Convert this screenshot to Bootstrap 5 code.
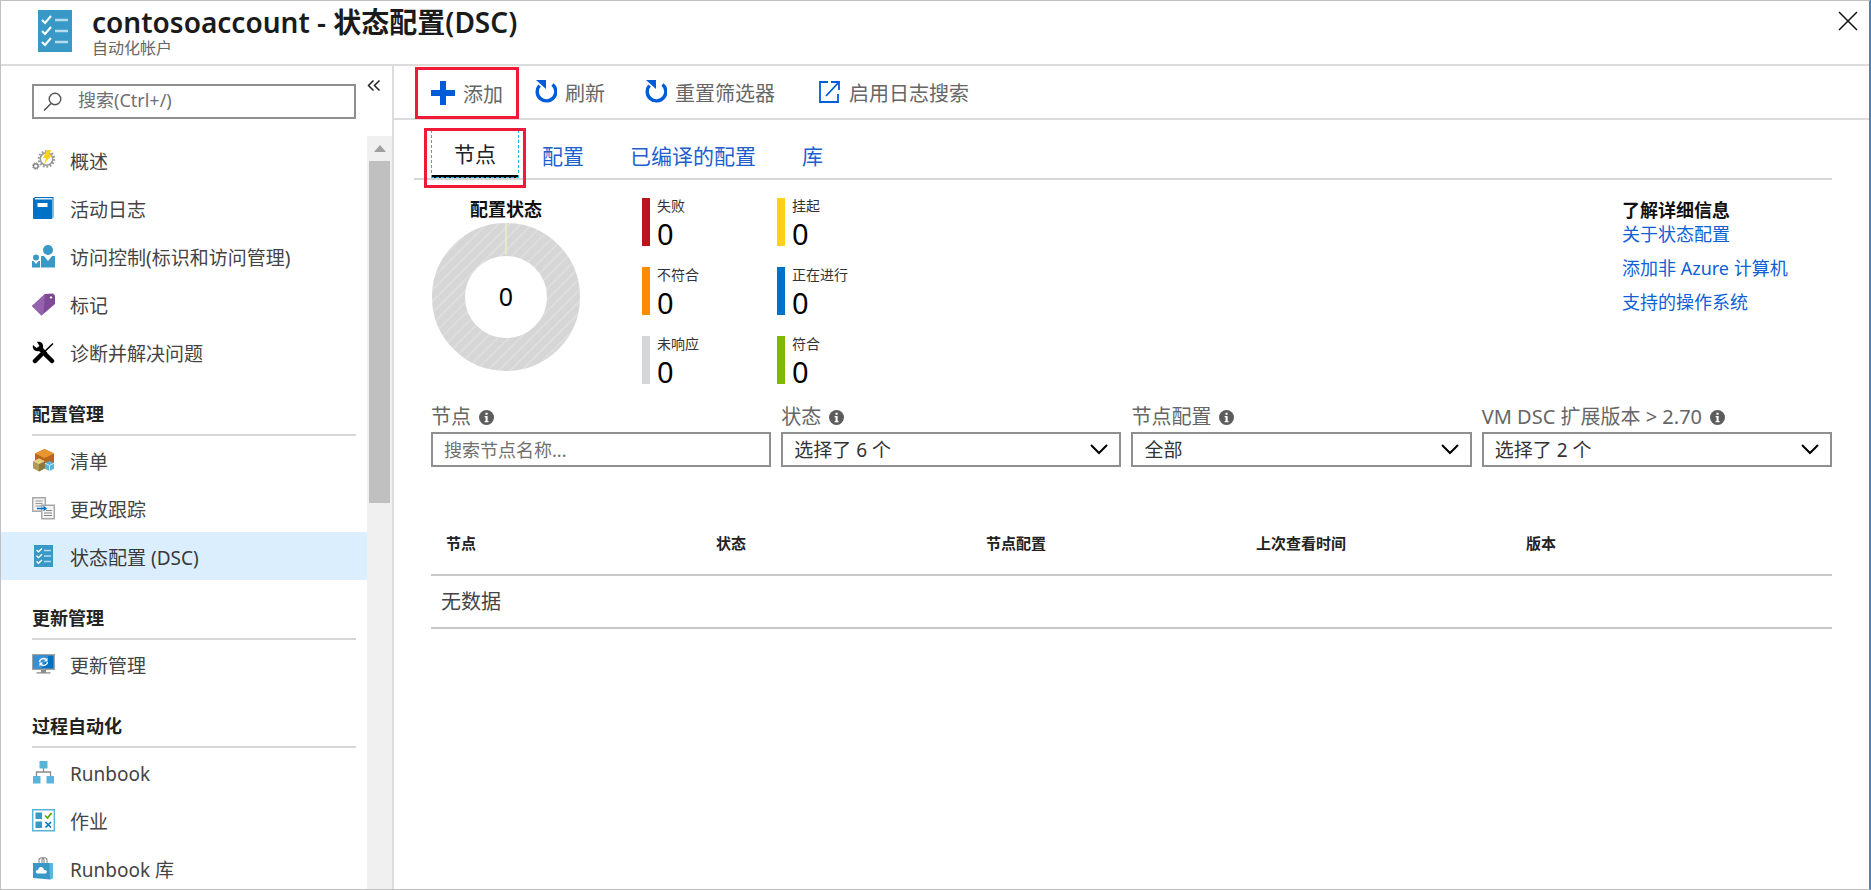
<!DOCTYPE html>
<html lang="zh-CN">
<head>
<meta charset="utf-8">
<meta name="viewport" content="width=device-width, initial-scale=1">
<title>contosoaccount - 状态配置(DSC)</title>
<link href="https://cdn.jsdelivr.net/npm/bootstrap@5.3.0/dist/css/bootstrap.min.css" rel="stylesheet">
<style>
  body { font-family: "Noto Sans", "Noto Sans CJK SC", sans-serif; font-size: 19px; line-height: 28px; color: #444; background: #fff; }
  a { text-decoration: none; color: #0f5fd6; }
  .blade { border: 1px solid #c0c0c0; border-right: 2px solid #4f7fbe; overflow: hidden; }
  .blade-head { height: 65px; border-bottom: 2px solid #dcdcdc; padding: 5px 11px 0 37px; }
  .blade-title { font-size: 28px; line-height: 32px; font-weight: 600; color: #1b1b1b; }
  .blade-sub { font-size: 16px; line-height: 20px; color: #666; }
  .close-btn { width: 20px; height: 20px; margin-top: 5px; }
  .plain-btn { border: 0; background: none; padding: 0; color: inherit; }
  .fill-rest { flex: 1 1 auto; min-height: 0; }

  .side { width: 393px; border-right: 2px solid #dcdcdc; }
  .side-top { padding: 18px 11px 18px 31px; height: 70px; }
  .search-box { width: 324px; height: 35px; border: 2px solid #8f8f8f; padding: 0 9px; }
  .search-box input { border: 0; outline: 0; width: 100%; font-size: 18px; line-height: 24px; color: #444; padding: 0 0 3px; }
  .fold-btn { margin-top: -5px; }
  input::placeholder { color: #707070; opacity: 1; }
  .side-link { height: 48px; padding-left: 31px; gap: 15px; color: #444; }
  .side-link span { padding-top: 3px; }
  .side-link.current { background: #dbeefe; color: #383838; }
  .side-link svg { width: 23px; height: 23px; flex: none; }
  .side-group { height: 60px; margin: 0 11px 0 31px; padding-top: 24px; border-bottom: 2px solid #d6d6d6; font-size: 18px; line-height: 28px; font-weight: 700; color: #222; }
  .scroll-track { width: 25px; background: #f0f0f0; padding: 0 2px; }
  .scroll-up { height: 25px; }
  .scroll-thumb { height: 342px; background: #c0c0c0; }

  .tools { height: 54px; border-bottom: 2px solid #dcdcdc; padding-left: 21px; font-size: 20px; color: #666; }
  .tools button { height: 52px; }
  .tools span { padding-top: 3px; }
  .tools .tool-add { border: 3px solid #f01a38; padding: 0 13px; gap: 8px; margin-right: 16px; margin-top: 1px; }
  .tabs { margin: 0 37px 0 20px; padding-left: 17px; padding-top: 10px; height: 60px; border-bottom: 2px solid #d6d6d6; font-size: 21px; }
  .tabs button { height: 48px; padding: 3px 23px 0; color: #1d5fcd; }
  .tabs button.active { position: relative; color: #222; border-bottom: 3px solid #000; outline: 1px dashed #20b4e0; outline-offset: -1px; }
  .tabs button.active::after { content: ""; position: absolute; top: -2px; right: -7px; bottom: -13px; left: -7px; border: 3px solid #f01a38; }
  .body-pad { padding: 0 37px; }

  .donut-col { width: 150px; margin-right: 61px; }
  .strong-label { font-size: 18px; line-height: 26px; font-weight: 700; color: #111; }
  .legend { display: grid; grid-template-columns: 135px 135px; row-gap: 21px; margin-top: 18px; }
  .stat { height: 48px; border-left: 8px solid; padding-left: 7px; }
  .stat dt { font-size: 14px; line-height: 16px; font-weight: 400; color: #333; }
  .stat dd { font-size: 29px; line-height: 40px; color: #000; margin: 0; }
  .s-fail { border-color: #bc141a; } .s-pend { border-color: #fdd116; }
  .s-non { border-color: #ff8c00; } .s-prog { border-color: #0072c6; }
  .s-un { border-color: #d4d6d8; } .s-ok { border-color: #7fba00; }
  .learn { width: 210px; margin-top: 18px; font-size: 18px; }
  .learn .strong-label { line-height: 24px; }
  .learn a { line-height: 24px; margin-bottom: 10px; }

  .filters { display: grid; grid-template-columns: 34fr 34fr 34fr 35fr; column-gap: 10px; margin-top: 18px; }
  .filters label { font-size: 20px; line-height: 28px; height: 30px; gap: 8px; color: #666; }
  .filters .field { width: 100%; height: 35px; border: 2px solid #8f8f8f; border-radius: 0; background-color: #fff; color: #333; font-size: 19px; line-height: 24px; padding: 0 11px; }
  .filters input.field { font-size: 18px; }
  .filters select.field { appearance: none; background: #fff url("data:image/svg+xml,%3Csvg xmlns='http://www.w3.org/2000/svg' width='18' height='11' viewBox='0 0 18 11'%3E%3Cpath d='M1 1l8 8 8-8' fill='none' stroke='%23000' stroke-width='2'/%3E%3C/svg%3E") no-repeat right 11px center; }

  .nodes { width: 100%; table-layout: fixed; margin-top: 45px; border-collapse: collapse; }
  .nodes th { width: 270px; height: 63px; padding: 0 0 1px 15px; font-size: 15px; line-height: 20px; font-weight: 700; color: #222; border-bottom: 2px solid #c8c8c8; }
  .nodes th:last-child { width: auto; }
  .nodes td { height: 53px; padding: 0 0 0 10px; font-size: 20px; border-bottom: 2px solid #c8c8c8; }
</style>
</head>
<body>
<div class="blade d-flex flex-column vh-100">
  <header class="blade-head d-flex align-items-start flex-shrink-0">
    <svg class="mt-1 flex-shrink-0" width="34" height="42" viewBox="0 0 34 42" aria-hidden="true"><path fill="#3999c6" d="M0 0h34v42H0z"/><path d="M17 10h13M17 21h13M17 32h13" stroke="#b5dcee" stroke-width="2.4"/><path d="M4 10l3 3 6-7M4 21l3 3 6-7M4 32l3 3 6-7" fill="none" stroke="#fff" stroke-width="2"/></svg>
    <div class="ms-3 ps-1 flex-grow-1">
      <h1 class="blade-title m-0">contosoaccount - 状态配置(DSC)</h1>
      <div class="blade-sub">自动化帐户</div>
    </div>
    <button class="plain-btn close-btn d-flex" type="button" aria-label="关闭"><svg width="20" height="20" viewBox="0 0 20 20"><path d="M1 1l18 18M19 1L1 19" stroke="#111" stroke-width="1.5"/></svg></button>
  </header>

  <div class="fill-rest d-flex">
    <aside class="side d-flex flex-column flex-shrink-0">
      <div class="side-top d-flex align-items-start justify-content-between flex-shrink-0">
        <div class="search-box d-flex align-items-center">
          <svg class="me-3 flex-shrink-0" width="19" height="19" viewBox="0 0 19 19" aria-hidden="true"><circle cx="12" cy="7" r="5.8" fill="none" stroke="#555" stroke-width="1.4"/><path d="M8 11.500L1 18.500" stroke="#555" stroke-width="1.6"/></svg>
          <input type="text" placeholder="搜索(Ctrl+/)" aria-label="搜索">
        </div>
        <button class="plain-btn fold-btn d-flex" type="button" aria-label="折叠"><svg width="14" height="14" viewBox="0 0 14 14"><path d="M6.500 1.500L1.500 6.500l5 5M12.500 1.500l-5 5 5 5" fill="none" stroke="#222" stroke-width="1.5"/></svg></button>
      </div>
      <div class="fill-rest d-flex">
        <nav class="flex-grow-1 overflow-hidden">
          <a href="#" class="side-link d-flex align-items-center"><svg viewBox="0 0 23 23"><circle cx="14.500" cy="10" r="7.700" fill="none" stroke="#999" stroke-width="2.200" stroke-dasharray="1.800 1.656"/><circle cx="14.500" cy="10" r="6.200" fill="#fff" stroke="#999" stroke-width="1.500"/><path d="M15 1h4l-2 5h3l-8 9 2-6h-3z" fill="#fcd116"/><circle cx="3.800" cy="17" r="2.300" fill="#fff" stroke="#888" stroke-width="1.500"/><circle cx="3.800" cy="17" r="3.300" fill="none" stroke="#888" stroke-width="1" stroke-dasharray="1.300 1.290"/></svg><span>概述</span></a>
          <a href="#" class="side-link d-flex align-items-center"><svg viewBox="0 0 23 23"><path d="M3 0h19v20l-2 2V2z" fill="#7db8e0"/><path d="M1 1.500L3 0h18v1.300H3v1h17V22H2a1 1 0 0 1-1-1z" fill="#0072c6"/><path d="M3 1.300h17v1H3z" fill="#fff"/><path d="M5.500 6h10v4h-10z" fill="#fff"/></svg><span>活动日志</span></a>
          <a href="#" class="side-link d-flex align-items-center"><svg viewBox="0 0 23 23" fill="#3999c6"><circle cx="16" cy="5" r="5"/><path d="M9 11h3l4 5 4-5h3v11.500H9z"/><circle cx="4" cy="12.500" r="3"/><path d="M0 16h1.500L4 19l2.500-3H8v6.500H0z"/></svg><span>访问控制(标识和访问管理)</span></a>
          <a href="#" class="side-link d-flex align-items-center"><svg viewBox="0 0 23 23"><path d="M0 13L13 1l8-.5 2 2V11L9.500 22.500z" fill="#804998"/><path d="M0 13L13 1l-1.500 19-2 2.500z" fill="#9563ad"/><circle cx="19" cy="4.500" r="1.700" fill="#fff" stroke="#4d2b5d" stroke-width=".8"/></svg><span>标记</span></a>
          <a href="#" class="side-link d-flex align-items-center"><svg viewBox="0 0 23 23"><path d="M21 2.500L6 17" stroke="#000" stroke-width="1.600"/><path d="M9 14l-6 6" stroke="#000" stroke-width="4.500" stroke-linecap="round"/><path d="M13 13l7 7" stroke="#000" stroke-width="4.500" stroke-linecap="round"/><path d="M5 1c4-1 7 2 6 6l4.500 5-3 3L7 10C3 11 0 8 1 4l3.500 3L7.500 5z"/></svg><span>诊断并解决问题</span></a>
          <div class="side-group">配置管理</div>
          <a href="#" class="side-link d-flex align-items-center"><svg viewBox="0 0 23 23"><path d="M12.500 0L22 4.500v10L12.500 19 3 14.500v-10z" fill="#b8671c"/><path d="M12.500 0L22 4.500 12.500 9 3 4.500z" fill="#e8962e"/><path d="M7 9.500l6 2.800v7L7 22.500l-6-3.200v-7z" fill="#b09a58"/><path d="M7 9.500l6 2.800-6 3-6-3z" fill="#e8cf80"/><path d="M7 15.300l6-3v7L7 22.500z" fill="#8c7840"/><path d="M17.500 12l4.500 2.200v5.500L17.500 22 13 19.700v-5.500z" fill="#59b4d9"/><path d="M13 14.200l4.500 2.300 4.500-2.300M17.500 16.500V22" fill="none" stroke="#cdeaf7"/></svg><span>清单</span></a>
          <a href="#" class="side-link d-flex align-items-center"><svg viewBox="0 0 23 23"><path d="M.7.700h12.600v13.600H.7z" fill="#f2f2f2" stroke="#a8a8a8" stroke-width="1.400"/><path d="M3.500 4h7M3.500 6.500h7M3.500 9h7" stroke="#999" stroke-width="1.200"/><path d="M9.700 8.200h12.600v13.600H9.700z" fill="#f2f2f2" stroke="#a8a8a8" stroke-width="1.400"/><path d="M14 13.500h6M12 16h8M12 18.500h8" stroke="#888" stroke-width="1.200"/><path d="M5 11.500h8M11.500 9.500l2.500 2-2.500 2" fill="none" stroke="#0072c6" stroke-width="1.400"/></svg><span>更改跟踪</span></a>
          <a href="#" class="side-link current d-flex align-items-center" aria-current="page"><svg viewBox="0 0 23 23"><path d="M2 0h19v22H2z" fill="#3999c6"/><path d="M12 5.500h7M12 11h7M12 16.500h7" stroke="#b5dcee" stroke-width="1.300"/><path d="M4.500 5l2 1.800L10 3.500M4.500 10.800l2 1.800L10 9.300M4.500 16.500l2 1.800L10 15" fill="none" stroke="#fff" stroke-width="1.300"/></svg><span>状态配置 (DSC)</span></a>
          <div class="side-group">更新管理</div>
          <a href="#" class="side-link d-flex align-items-center"><svg viewBox="0 0 23 23"><path d="M0 1h23v16H0z" fill="#a0a1a2"/><path d="M1.500 2.500h20v13h-20z" fill="#0072c6"/><path d="M1.500 2.500h15l-7 13h-8z" fill="#3a8fd2"/><path d="M9 17h5v2.200h4.500V20.500h-14v-1.300H9z" fill="#8a8a8a"/><path d="M7.500 9c0-3 4-4.500 6.500-2.500M15.500 9c0 3-4 4.500-6.500 2.500" fill="none" stroke="#fff" stroke-width="1.400"/><path d="M15.500 4.500v4h-3.500zM7.500 13.500v-4H11z" fill="#fff"/></svg><span>更新管理</span></a>
          <div class="side-group">过程自动化</div>
          <a href="#" class="side-link d-flex align-items-center"><svg viewBox="0 0 23 23"><path d="M11.500 7v4M4.500 15.500V11h14v4.500" fill="none" stroke="#8a8a8a" stroke-width="1.300"/><g fill="#59b4d9"><rect x="7.500" y="0" width="8" height="7.500" rx=".5"/><rect x="1" y="15" width="7.500" height="7.500" rx=".5"/><rect x="14.500" y="15" width="7.500" height="7.500" rx=".5"/></g></svg><span>Runbook</span></a>
          <a href="#" class="side-link d-flex align-items-center"><svg viewBox="0 0 23 23"><path d="M.7.700h21.600v21.100H.7z" fill="#fff" stroke="#59b4d9" stroke-width="1.400"/><path d="M3.500 3.500h6.500V10H3.500zM3.500 12.500h6.500V19H3.500z" fill="#3999c6"/><path d="M13 6.500l2.500 2.500L19.500 4" fill="none" stroke="#57a300" stroke-width="1.700"/><path d="M13.500 13l5.500 5.500M19 13l-5.500 5.500" stroke="#0072c6" stroke-width="1.600"/></svg><span>作业</span></a>
          <a href="#" class="side-link d-flex align-items-center"><svg viewBox="0 0 23 23"><path d="M7 7V3c0-3 5-3 5 0v4M10 7V3c0-3 5-3 5 0v4" fill="none" stroke="#888" stroke-width="1.100"/><path d="M1 6h20v15l-3 1.500L1 21z" fill="#3999c6"/><path d="M17.500 6H21v15l-3 1.500z" fill="#5fb5da"/><path d="M5.500 16.500c-2.500-.5-2-4 .5-3.500.5-4 5.500-4 6 0 3.500-.5 3.500 3.500 1 3.500z" fill="#fff"/></svg><span>Runbook 库</span></a>
        </nav>
        <div class="scroll-track flex-shrink-0" aria-hidden="true">
          <div class="scroll-up d-flex align-items-center justify-content-center"><svg width="12" height="7" viewBox="0 0 12 7"><path d="M6 0l6 7H0z" fill="#a0a0a0"/></svg></div>
          <div class="scroll-thumb"></div>
        </div>
      </div>
    </aside>

    <main class="flex-grow-1">
      <div class="tools d-flex align-items-start">
        <button type="button" class="plain-btn tool-add d-flex align-items-center"><svg width="24" height="24" viewBox="0 0 24 24" aria-hidden="true"><path d="M9 0h6v9h9v6h-9v9H9v-9H0V9h9z" fill="#015cda"/></svg><span>添加</span></button>
        <button type="button" class="plain-btn d-flex align-items-center gap-2"><svg width="22" height="26" viewBox="0 0 22 26" aria-hidden="true"><path d="M17.500 5.500A9.300 9.300 0 1 1 4.500 6.500" fill="none" stroke="#015cda" stroke-width="3.400"/><path d="M1 1h10v9z" fill="#015cda"/></svg><span>刷新</span></button>
        <button type="button" class="plain-btn d-flex align-items-center gap-2 ms-4 ps-3"><svg width="22" height="26" viewBox="0 0 22 26" aria-hidden="true"><path d="M17.500 5.500A9.300 9.300 0 1 1 4.500 6.500" fill="none" stroke="#015cda" stroke-width="3.400"/><path d="M1 1h10v9z" fill="#015cda"/></svg><span>重置筛选器</span></button>
        <button type="button" class="plain-btn d-flex align-items-center gap-2 ms-4 ps-3"><svg class="ms-1" width="22" height="22" viewBox="0 0 22 22" aria-hidden="true"><path d="M9 1H1v20h18v-8M12 1h8v8M20 1L7 15" fill="none" stroke="#015cda" stroke-width="1.800"/></svg><span>启用日志搜索</span></button>
      </div>

      <div class="tabs d-flex" role="tablist">
        <button type="button" class="plain-btn active" role="tab" aria-selected="true">节点</button>
        <button type="button" class="plain-btn" role="tab">配置</button>
        <button type="button" class="plain-btn" role="tab">已编译的配置</button>
        <button type="button" class="plain-btn" role="tab">库</button>
      </div>

      <div class="body-pad">
        <section class="d-flex align-items-start">
          <div class="donut-col d-flex flex-column align-items-center pt-3">
            <div class="strong-label">配置状态</div>
            <svg width="150" height="150" viewBox="0 0 150 150" role="img" aria-label="0">
              <defs><pattern id="hatch" width="8" height="8" patternUnits="userSpaceOnUse" patternTransform="rotate(45)"><path fill="#d6d6d6" d="M0 0h8v8H0z"/><path fill="#dddddd" d="M0 0h2v8H0z"/></pattern></defs>
              <circle cx="75" cy="75" r="57.500" fill="none" stroke="url(#hatch)" stroke-width="33"/>
              <path d="M75 1v32" stroke="#e3ecc4" stroke-width="2"/>
              <text x="75" y="84" text-anchor="middle" font-size="25" fill="#000">0</text>
            </svg>
          </div>
          <dl class="legend mb-0">
            <div class="stat s-fail"><dt>失败</dt><dd>0</dd></div>
            <div class="stat s-pend"><dt>挂起</dt><dd>0</dd></div>
            <div class="stat s-non"><dt>不符合</dt><dd>0</dd></div>
            <div class="stat s-prog"><dt>正在进行</dt><dd>0</dd></div>
            <div class="stat s-un"><dt>未响应</dt><dd>0</dd></div>
            <div class="stat s-ok"><dt>符合</dt><dd>0</dd></div>
          </dl>
          <div class="learn ms-auto d-flex flex-column">
            <div class="strong-label">了解详细信息</div>
            <a href="#">关于状态配置</a>
            <a href="#">添加非 Azure 计算机</a>
            <a href="#">支持的操作系统</a>
          </div>
        </section>

        <section class="filters">
          <div>
            <label for="f-node" class="d-flex align-items-center">节点 <svg width="15" height="15" viewBox="0 0 16 16" aria-hidden="true"><circle cx="8" cy="8" r="8" fill="#5c5c5c"/><path d="M6 6.500h3.200v5.300h1V13H6v-1.200h1V7.700H6zM6.900 2.800h2.300V5H6.900z" fill="#fff"/></svg></label>
            <input id="f-node" class="field" type="text" placeholder="搜索节点名称...">
          </div>
          <div>
            <label for="f-state" class="d-flex align-items-center">状态 <svg width="15" height="15" viewBox="0 0 16 16" aria-hidden="true"><circle cx="8" cy="8" r="8" fill="#5c5c5c"/><path d="M6 6.500h3.200v5.300h1V13H6v-1.200h1V7.700H6zM6.900 2.800h2.300V5H6.900z" fill="#fff"/></svg></label>
            <select id="f-state" class="field"><option>选择了 6 个</option></select>
          </div>
          <div>
            <label for="f-conf" class="d-flex align-items-center">节点配置 <svg width="15" height="15" viewBox="0 0 16 16" aria-hidden="true"><circle cx="8" cy="8" r="8" fill="#5c5c5c"/><path d="M6 6.500h3.200v5.300h1V13H6v-1.200h1V7.700H6zM6.900 2.800h2.300V5H6.900z" fill="#fff"/></svg></label>
            <select id="f-conf" class="field"><option>全部</option></select>
          </div>
          <div>
            <label for="f-ver" class="d-flex align-items-center">VM DSC 扩展版本 &gt; 2.70 <svg width="15" height="15" viewBox="0 0 16 16" aria-hidden="true"><circle cx="8" cy="8" r="8" fill="#5c5c5c"/><path d="M6 6.500h3.200v5.300h1V13H6v-1.200h1V7.700H6zM6.900 2.800h2.300V5H6.900z" fill="#fff"/></svg></label>
            <select id="f-ver" class="field"><option>选择了 2 个</option></select>
          </div>
        </section>

        <table class="nodes">
          <thead><tr><th>节点</th><th>状态</th><th>节点配置</th><th>上次查看时间</th><th>版本</th></tr></thead>
          <tbody><tr><td colspan="5">无数据</td></tr></tbody>
        </table>
      </div>
    </main>
  </div>
</div>
<script src="https://cdn.jsdelivr.net/npm/bootstrap@5.3.0/dist/js/bootstrap.bundle.min.js"></script>
</body>
</html>
